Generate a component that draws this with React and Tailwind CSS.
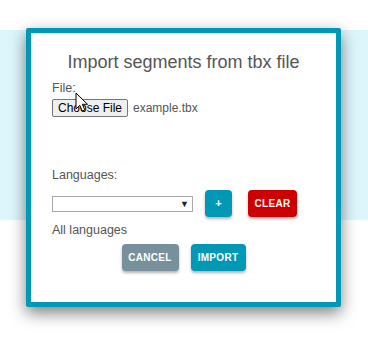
import React from 'react';

const font = { fontFamily: '"Liberation Sans", Arial, sans-serif' };

const Cursor = () => (
  <svg
    className="absolute left-[75px] top-[92px] pointer-events-none"
    width="14"
    height="21"
    viewBox="0 0 14 21"
  >
    <path
      d="M1 1 L1 17 L4.8 13.3 L7.3 19 L9.8 17.9 L7.4 12.3 L12.5 12.3 Z"
      fill="#fff"
      stroke="#000"
      strokeWidth="1"
      strokeLinejoin="miter"
    />
  </svg>
);

const ImportDialog = () => {
  return (
    <div className="absolute left-[26px] top-[28px] w-[315px] h-[279px] border-[5px] border-[#0098b4] rounded-[2px] bg-white shadow-[0_6px_16px_rgba(0,0,0,0.5)]">
      <div className="pt-[19px] px-[21px] text-[#555] text-[12.5px] leading-[15px]">
        {/* Title */}
        <h2 className="text-center text-[18px] leading-[21px] font-normal">
          Import segments from tbx file
        </h2>

        {/* File picker */}
        <div className="mt-[8px]">File:</div>
        <div className="mt-[3px] flex items-center gap-[5px]">
          <button className="h-[18px] w-[76px] border border-[#767676] rounded-[2px] bg-[#efefef] text-black text-[12px] leading-[16px]">
            Choose File
          </button>
          <span className="text-[12px] text-[#555]">example.tbx</span>
        </div>

        {/* Languages */}
        <div className="mt-[51px]">Languages:</div>
        <div className="mt-[7px] flex items-center">
          <div className="relative h-[16px] w-[141px] border border-[#a9a9a9] bg-white">
            <span className="absolute right-[3px] top-[1px] text-[9px] leading-[12px] text-[#222]">▼</span>
          </div>
          <button className="ml-[12px] h-[27px] w-[27px] rounded-[4px] bg-[#0098b4] text-white text-[11px] font-bold shadow-[0_2px_3px_rgba(0,0,0,0.3)]">
            +
          </button>
          <button className="ml-[16px] h-[27px] w-[49px] rounded-[4px] bg-[#cc0000] text-white text-[10px] font-bold tracking-[0.3px] shadow-[0_2px_3px_rgba(0,0,0,0.3)]">
            CLEAR
          </button>
        </div>
        <div className="mt-[6px]">All languages</div>

        {/* Actions */}
        <div className="mt-[6px] flex justify-center gap-[12px]">
          <button className="h-[27px] w-[57px] rounded-[4px] bg-[#78909c] text-white text-[10px] font-bold tracking-[0.3px] shadow-[0_2px_3px_rgba(0,0,0,0.3)]">
            CANCEL
          </button>
          <button className="h-[27px] w-[55px] rounded-[4px] bg-[#0098b4] text-white text-[10px] font-bold tracking-[0.3px] shadow-[0_2px_3px_rgba(0,0,0,0.3)]">
            IMPORT
          </button>
        </div>
      </div>
    </div>
  );
};

export default function App() {
  return (
    <div className="relative w-[368px] h-[340px] overflow-hidden bg-white" style={font}>
      {/* page behind the dialog */}
      <div className="mt-[30px] h-[190px] bg-[#ddf6fc]"></div>
      <ImportDialog />
      <Cursor />
    </div>
  );
}
